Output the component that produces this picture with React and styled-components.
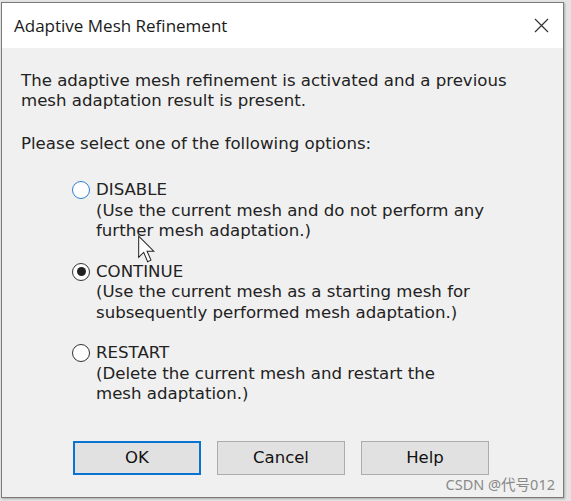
import React from 'react'
import styled, { createGlobalStyle } from 'styled-components'

const Global = createGlobalStyle`
  html, body {
    margin: 0;
    padding: 0;
    background: #e4e4e4;
  }
  #root {
    width: 571px;
    height: 501px;
    overflow: hidden;
  }
`

const Page = styled.div`
  width: 571px;
  height: 501px;
  padding: 2px 0 0 1px;
  box-sizing: border-box;
  position: relative;
`

const Dialog = styled.div`
  width: 563px;
  height: 496px;
  box-sizing: border-box;
  border: 1px solid #7a7a7a;
  background: #f0f0f0;
  display: flex;
  flex-direction: column;
  box-shadow: 1px 1px 2px rgba(0, 0, 0, 0.25);
  position: relative;
`

const TitleBar = styled.div`
  height: 45px;
  background: #ffffff;
  display: flex;
  align-items: center;
  justify-content: space-between;
  padding: 0 14px 0 12px;
  box-sizing: border-box;
`

const Title = styled.div`
  font-family: "Open Sans", "Noto Sans", sans-serif;
  font-size: 17px;
  color: #1a1a1a;
  margin-top: -1px;
`

const Body = styled.div`
  flex: 1;
  display: flex;
  flex-direction: column;
  padding: 23px 0 0 19px;
  font-family: "DejaVu Sans", sans-serif;
  font-size: 16.6px;
  color: #222;
`

const Para = styled.p`
  margin: 0;
  line-height: 20px;
  margin-bottom: ${p => p.$gap || 0}px;
`

const Options = styled.div`
  display: flex;
  flex-direction: column;
  gap: 20px;
  padding-left: 51px;
  margin-top: 26px;
`

const Option = styled.div`
  display: flex;
  align-items: flex-start;
  gap: 6px;
`

const Radio = styled.span`
  width: 18px;
  height: 18px;
  border-radius: 50%;
  box-sizing: border-box;
  border: 1.5px solid ${p => (p.$hover ? '#2a7fd4' : '#333')};
  background: #fff;
  display: flex;
  align-items: center;
  justify-content: center;
  margin-top: 1px;
  flex-shrink: 0;
`

const Dot = styled.span`
  width: 9px;
  height: 9px;
  border-radius: 50%;
  background: #222;
`

const OptionText = styled.div`
  line-height: 20.5px;
`

const Buttons = styled.div`
  display: flex;
  gap: 16px;
  padding-left: 52px;
  margin-top: 36px;
`

const Button = styled.div`
  width: 128px;
  height: 34px;
  box-sizing: border-box;
  border: ${p => (p.$primary ? '2px solid #0a73d1' : '1px solid #acacac')};
  background: #e1e1e1;
  display: flex;
  align-items: center;
  justify-content: center;
  font-family: "DejaVu Sans", sans-serif;
  font-size: 16.5px;
  color: #111;
`

const Watermark = styled.div`
  position: absolute;
  right: 16px;
  bottom: 7px;
  font-family: "Noto Sans", "Noto Sans CJK SC", sans-serif;
  font-size: 14.5px;
  color: #8a8a8a;
`

const Cursor = styled.svg`
  position: absolute;
  left: 135px;
  top: 232px;
`

const CloseIcon = () => (
  <svg width="15" height="15" viewBox="0 0 15 15">
    <path d="M1 1 L14 14 M14 1 L1 14" stroke="#333" strokeWidth="1.2" />
  </svg>
)

const options = [
  {
    label: 'DISABLE',
    lines: ['(Use the current mesh and do not perform any', 'further mesh adaptation.)'],
    hover: true,
  },
  {
    label: 'CONTINUE',
    lines: ['(Use the current mesh as a starting mesh for', 'subsequently performed mesh adaptation.)'],
    checked: true,
  },
  {
    label: 'RESTART',
    lines: ['(Delete the current mesh and restart the', 'mesh adaptation.)'],
  },
]

export default function App() {
  return (
    <Page>
      <Global />
      <Dialog>
        <TitleBar>
          <Title>Adaptive Mesh Refinement</Title>
          <CloseIcon />
        </TitleBar>
        <Body>
          <Para $gap={23}>
            The adaptive mesh refinement is activated and a previous
            <br />
            mesh adaptation result is present.
          </Para>
          <Para>Please select one of the following options:</Para>
          <Options>
            {options.map(o => (
              <Option key={o.label}>
                <Radio $hover={o.hover}>{o.checked && <Dot />}</Radio>
                <OptionText>
                  {o.label}
                  {o.lines.map(l => (
                    <div key={l}>{l}</div>
                  ))}
                </OptionText>
              </Option>
            ))}
          </Options>
          <Buttons>
            <Button $primary>OK</Button>
            <Button>Cancel</Button>
            <Button>Help</Button>
          </Buttons>
        </Body>
        <Cursor width="19" height="29" viewBox="0 0 16 26">
          <path d="M1 1 L1 20 L5.5 15.5 L9 24 L12 22.5 L8.5 14.5 L14.5 14.5 Z" fill="#fff" stroke="#222" strokeWidth="0.9" />
        </Cursor>
      </Dialog>
      <Watermark>CSDN @代号012</Watermark>
    </Page>
  )
}
